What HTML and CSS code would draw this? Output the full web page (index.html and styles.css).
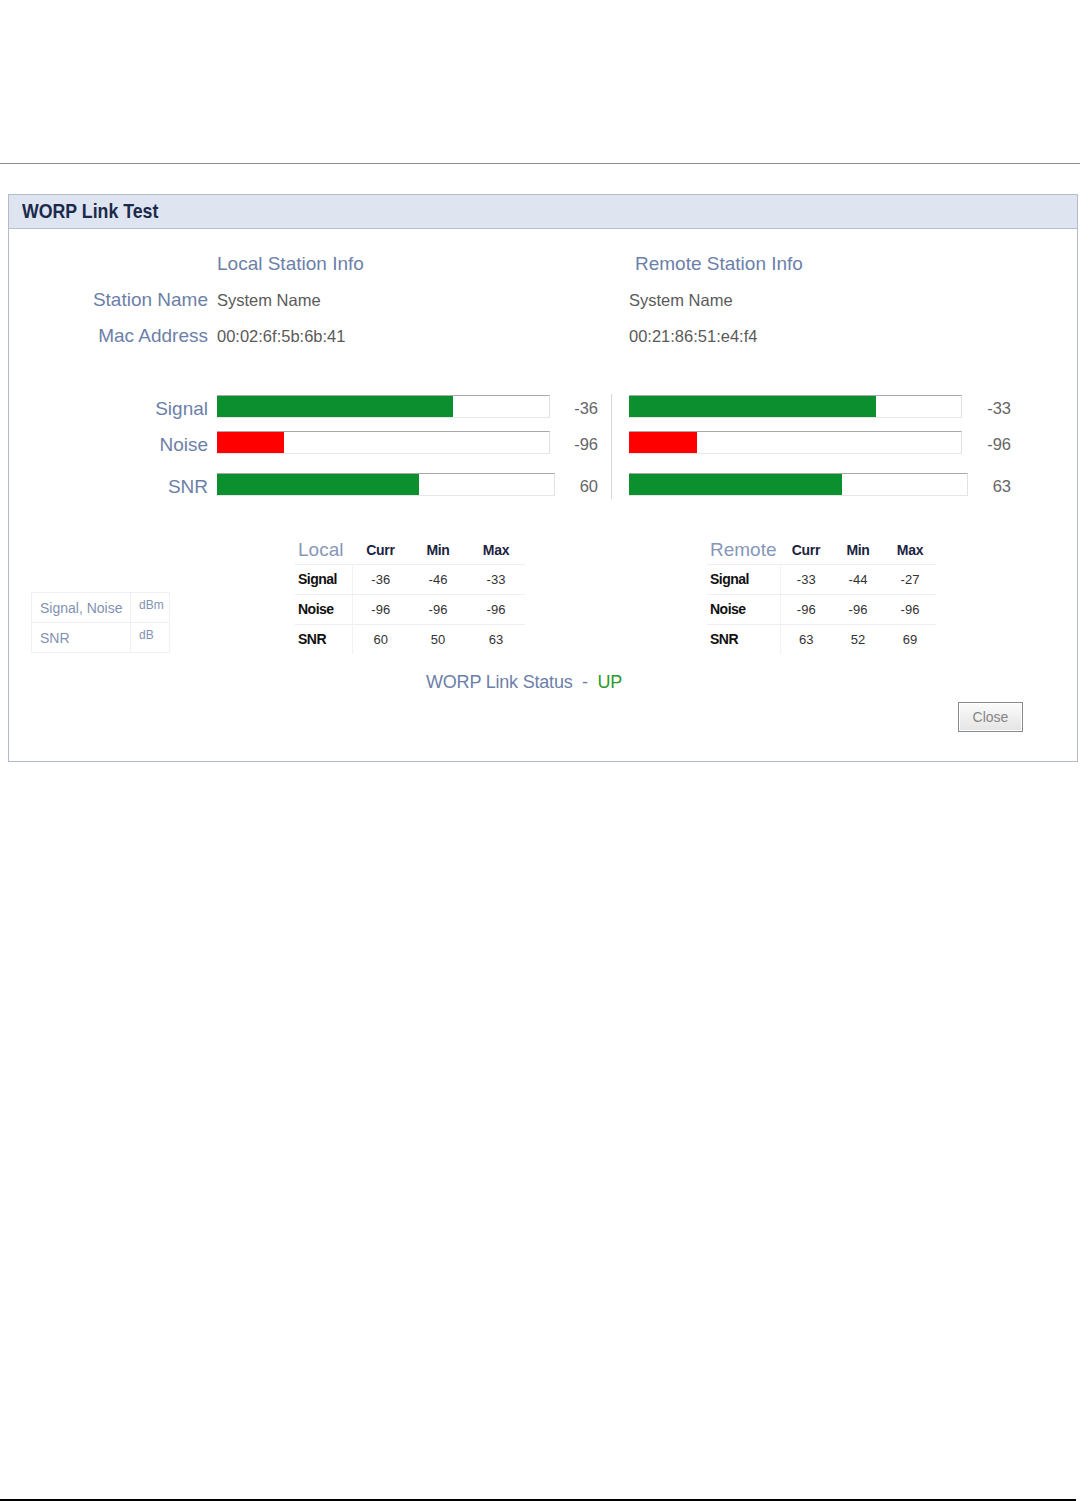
FILE: index.html
```html
<!DOCTYPE html>
<html lang="en">
<head>
    <meta charset="UTF-8">
    <title>WORP Link Test</title>
    <link rel="stylesheet" href="styles.css">
</head>
<body>
    <div class="page-top"></div>

    <div class="panel">
        <div class="panel-header"><span class="panel-title">WORP Link Test</span></div>

        <div class="panel-body">
            <div class="station-info">
                <div></div>
                <div class="info-heading">Local Station Info</div>
                <div class="info-heading remote">Remote Station Info</div>

                <div class="info-label">Station Name</div>
                <div class="info-value">System Name</div>
                <div class="info-value">System Name</div>

                <div class="info-label">Mac Address</div>
                <div class="info-value">00:02:6f:5b:6b:41</div>
                <div class="info-value">00:21:86:51:e4:f4</div>
            </div>

            <div class="meters">
                <div class="meter-label">Signal</div>
                <div class="bar"><div class="fill green" style="width: 71%"></div></div>
                <div class="meter-value">-36</div>
                <div class="meter-sep"></div>
                <div class="bar"><div class="fill green" style="width: 74.5%"></div></div>
                <div class="meter-value">-33</div>

                <div class="meter-label">Noise</div>
                <div class="bar"><div class="fill red" style="width: 20.2%"></div></div>
                <div class="meter-value">-96</div>
                <div class="bar"><div class="fill red" style="width: 20.4%"></div></div>
                <div class="meter-value">-96</div>

                <div class="meter-label">SNR</div>
                <div class="bar wide"><div class="fill green" style="width: 60%"></div></div>
                <div class="meter-value">60</div>
                <div class="bar wide"><div class="fill green" style="width: 63%"></div></div>
                <div class="meter-value">63</div>
            </div>

            <div class="tables">
                <table class="units">
                    <tr><td>Signal, Noise</td><td class="unit">dBm</td></tr>
                    <tr><td>SNR</td><td class="unit">dB</td></tr>
                </table>

                <table class="stats local">
                    <tr><th class="stats-title">Local</th><th>Curr</th><th>Min</th><th>Max</th></tr>
                    <tr><td class="row-name">Signal</td><td>-36</td><td>-46</td><td>-33</td></tr>
                    <tr><td class="row-name">Noise</td><td>-96</td><td>-96</td><td>-96</td></tr>
                    <tr><td class="row-name">SNR</td><td>60</td><td>50</td><td>63</td></tr>
                </table>

                <table class="stats remote">
                    <tr><th class="stats-title">Remote</th><th>Curr</th><th>Min</th><th>Max</th></tr>
                    <tr><td class="row-name">Signal</td><td>-33</td><td>-44</td><td>-27</td></tr>
                    <tr><td class="row-name">Noise</td><td>-96</td><td>-96</td><td>-96</td></tr>
                    <tr><td class="row-name">SNR</td><td>63</td><td>52</td><td>69</td></tr>
                </table>
            </div>

            <div class="link-status">WORP Link Status &nbsp;-&nbsp; <span class="status-up">UP</span></div>

            <div class="actions">
                <button class="close-button">Close</button>
            </div>
        </div>
    </div>

    <div class="page-bottom"></div>
</body>
</html>
```

FILE: styles.css
```css
:root {
    --label: #6c7fa9;
    --label-light: #8797b8;
    --value: #5a5a5a;
    --panel-border: #b4bacb;
    --green: #0b8f2f;
    --red: #ff0000;
}

* {
    margin: 0;
    padding: 0;
    box-sizing: border-box;
}

body {
    font-family: "Liberation Sans", Arial, sans-serif;
    background: #fff;
    color: var(--value);
    width: 1090px;
}

.page-top {
    height: 164px;
    width: 1080px;
    border-bottom: 1px solid #8c8c8c;
}

.page-bottom {
    width: 1076px;
    height: 2px;
    margin-top: 737px;
    background: #000;
}

.panel {
    width: 1070px;
    margin: 30px 0 0 8px;
    border: 1px solid var(--panel-border);
}

.panel-header {
    height: 34px;
    line-height: 32px;
    padding-left: 13px;
    background: #dee5f0;
    border-bottom: 1px solid #b7bfd0;
    color: #1b2a4c;
    font-weight: bold;
    font-size: 21px;
}

/* the original uses a narrow face; squeeze the regular one */
.panel-title {
    display: inline-block;
    transform: scaleX(0.845);
    transform-origin: left center;
}

.panel-body {
    padding: 17px 0 29px;
}

/* station info */
.station-info {
    display: grid;
    grid-template-columns: 208px 412px 1fr;
    line-height: 36px;
}

.info-heading {
    color: var(--label);
    font-size: 19px;
}

.info-heading.remote {
    padding-left: 6px;
}

.info-label {
    color: var(--label);
    font-size: 19px;
    text-align: right;
    padding-right: 9px;
}

.info-value {
    font-size: 16.5px;
    color: var(--value);
}

/* meters */
.meters {
    display: grid;
    grid-template-columns: 208px 338px 43px 31px 339px 43px;
    grid-template-rows: 36px 42px 23px;
    margin-top: 41px;
}

.meter-label,
.meter-value {
    height: 23px;
    line-height: 27px;
}

.meter-label {
    color: var(--label);
    font-size: 19px;
    text-align: right;
    padding-right: 9px;
}

.meter-value {
    font-size: 16.5px;
    color: #666;
    text-align: right;
}

.meter-sep {
    grid-column: 4;
    grid-row: 1 / 4;
    margin: -1px 0 -3px 13px;
    border-left: 1px solid #d4d8e0;
}

.bar {
    width: 333px;
    height: 23px;
    background: #fff;
    border-top: 1px solid #a9a9a9;
    border-right: 1px solid #e2e2e2;
    border-bottom: 1px solid #e6e6e6;
}

.bar.wide {
    width: 100%;
}

.fill {
    height: 100%;
}

.fill.green {
    background: var(--green);
}

.fill.red {
    background: var(--red);
}

/* tables */
.tables {
    display: flex;
    align-items: flex-end;
    margin-top: 40px;
    padding-left: 22px;
}

table {
    border-collapse: collapse;
}

.units {
    width: 139px;
    margin-bottom: 1px;
    font-size: 14px;
    color: #8292b2;
}

.units td {
    height: 30px;
    padding-left: 8px;
    border: 1px solid #edf0f4;
}

.units td.unit {
    width: 39px;
    font-size: 12px;
    vertical-align: top;
    padding-top: 5px;
}

.stats {
    table-layout: fixed;
}

.stats.local {
    width: 230px;
    margin-left: 125px;
}

.stats.remote {
    width: 229px;
    margin-left: 182px;
}

.stats th,
.stats td {
    text-align: center;
    border-bottom: 1px solid #eceef3;
}

.stats tr:last-child td {
    border-bottom: none;
}

.stats th {
    height: 28px;
    font-size: 14px;
    letter-spacing: -0.3px;
    color: #1b2440;
}

.stats td {
    height: 30px;
    font-size: 13px;
    color: #333;
}

.stats .stats-title {
    text-align: left;
    padding-left: 3px;
    font-weight: normal;
    font-size: 19px;
    letter-spacing: 0;
    color: var(--label-light);
}

.stats td.row-name {
    text-align: left;
    padding-left: 3px;
    font-weight: bold;
    font-size: 14px;
    letter-spacing: -0.5px;
    color: #111;
    border-right: 1px solid #f0f2f6;
}

.local th:nth-child(1), .local td:nth-child(1) { width: 57px; }
.local th:nth-child(2), .local td:nth-child(2) { width: 57px; }
.remote th:nth-child(1), .remote td:nth-child(1) { width: 73px; }

/* status + actions */
.link-status {
    margin: 16px 0 0 417px;
    line-height: 24px;
    font-size: 18px;
    letter-spacing: -0.2px;
    color: var(--label);
}

.status-up {
    color: #2a9a2a;
}

.actions {
    display: flex;
    justify-content: flex-end;
    padding-right: 54px;
    margin-top: 8px;
}

.close-button {
    width: 65px;
    height: 30px;
    font-family: "Liberation Sans", Arial, sans-serif;
    font-size: 14px;
    color: #858585;
    background: linear-gradient(#fbfbfb, #e4e4e4);
    border: 1px solid #8a8a8a;
    box-shadow: inset 0 0 0 1px #fff;
    cursor: pointer;
}
```
